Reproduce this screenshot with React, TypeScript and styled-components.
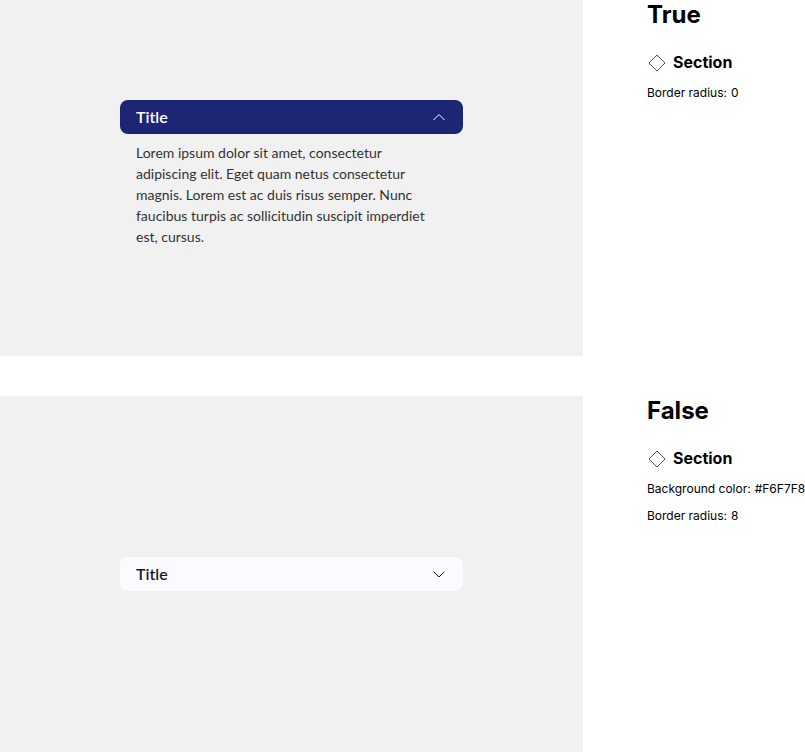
import React, { useId, useState } from "react";
import styled, { createGlobalStyle } from "styled-components";

const GlobalStyle = createGlobalStyle`
  *, *::before, *::after { box-sizing: border-box; }
  body {
    margin: 0;
    background: #ffffff;
    color: #000000;
    font-family: Inter, "Liberation Sans", sans-serif;
  }
`;

const Page = styled.main`
  display: flex;
  flex-direction: column;
  gap: 40px;
`;

const Variant = styled.section`
  display: flex;
  gap: 64px;
  min-height: 356px;
`;

const Stage = styled.div`
  flex: 1;
  display: flex;
  align-items: center;
  justify-content: center;
  padding: 0 16px;
  background: #f1f1f1;
`;

const Spec = styled.aside`
  flex: none;
  width: 158px;
  white-space: nowrap;
`;

const SpecTitle = styled.h2`
  margin: 0;
  font-size: 24px;
  line-height: 30px;
  font-weight: 700;
`;

const LayerName = styled.h3`
  display: flex;
  align-items: center;
  gap: 6px;
  margin: 20px 0 9px;
  font-size: 16px;
  line-height: 24px;
  font-weight: 700;
`;

const Properties = styled.dl`
  display: flex;
  flex-direction: column;
  gap: 7px;
  margin: 0;
  font-size: 12px;
  line-height: 20px;
`;

const Property = styled.div`
  display: flex;
  gap: 4px;
`;

const PropertyValue = styled.dd`
  margin: 0;
`;

const AccordionBox = styled.div`
  width: 100%;
  max-width: 343px;
  font-family: Lato, "Liberation Sans", sans-serif;
`;

const AccordionHeader = styled.button<{ $open: boolean }>`
  display: flex;
  align-items: center;
  justify-content: space-between;
  width: 100%;
  height: 34px;
  padding: 0 16px;
  border: 0;
  border-radius: 8px;
  background: ${({ $open }) => ($open ? "#1c2674" : "#fafbff")};
  color: ${({ $open }) => ($open ? "#ffffff" : "#1a1a1a")};
  font-family: inherit;
  font-size: 16px;
  line-height: 24px;
  font-weight: 600;
  cursor: pointer;
`;

const AccordionBody = styled.p`
  margin: 0;
  padding: 8px 24px 10px 16px;
  color: #333333;
  font-size: 14px;
  line-height: 21px;
`;

function Chevron({ up }: { up: boolean }) {
  return (
    <svg width="16" height="16" viewBox="0 0 16 16" fill="none" stroke="currentColor" aria-hidden="true">
      <path d={up ? "M2.5 11 8 5.5 13.5 11" : "M2.5 5.5 8 11 13.5 5.5"} />
    </svg>
  );
}

function Diamond() {
  return (
    <svg width="20" height="20" viewBox="0 0 20 20" fill="none" stroke="#555555" aria-hidden="true">
      <path d="M10 3 18 11 10 19 2 11Z" />
    </svg>
  );
}

function Accordion({ defaultOpen, title, children }: { defaultOpen: boolean; title: string; children: React.ReactNode }) {
  const [open, setOpen] = useState(defaultOpen);
  const bodyId = useId();
  return (
    <AccordionBox>
      <AccordionHeader type="button" $open={open} aria-expanded={open} aria-controls={bodyId} onClick={() => setOpen(!open)}>
        {title}
        <Chevron up={open} />
      </AccordionHeader>
      {open && <AccordionBody id={bodyId}>{children}</AccordionBody>}
    </AccordionBox>
  );
}

const variants = [
  { name: "True", open: true, properties: [["Border radius:", "0"]] },
  {
    name: "False",
    open: false,
    properties: [
      ["Background color:", "#F6F7F8"],
      ["Border radius:", "8"],
    ],
  },
];

export default function App() {
  return (
    <>
      <GlobalStyle />
      <Page>
        {variants.map((variant) => (
          <Variant key={variant.name}>
            <Stage>
              <Accordion defaultOpen={variant.open} title="Title">
                Lorem ipsum dolor sit amet, consectetur adipiscing elit. Eget quam netus consectetur magnis. Lorem est ac
                duis risus semper. Nunc faucibus turpis ac sollicitudin suscipit imperdiet est, cursus.
              </Accordion>
            </Stage>
            <Spec>
              <SpecTitle>{variant.name}</SpecTitle>
              <LayerName>
                <Diamond />
                Section
              </LayerName>
              <Properties>
                {variant.properties.map(([label, value]) => (
                  <Property key={label}>
                    <dt>{label}</dt>
                    <PropertyValue>{value}</PropertyValue>
                  </Property>
                ))}
              </Properties>
            </Spec>
          </Variant>
        ))}
      </Page>
    </>
  );
}
